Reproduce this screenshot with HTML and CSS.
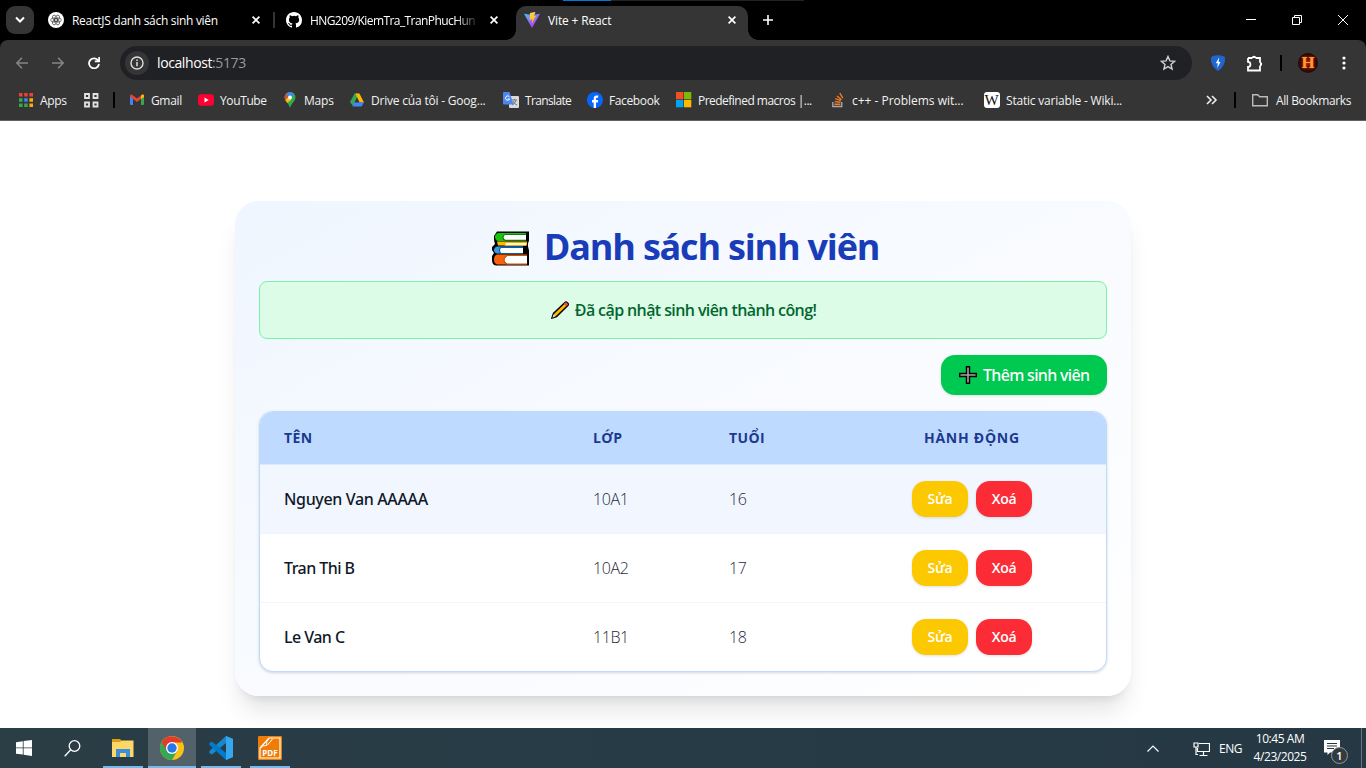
FILE: index.html
```html
<!DOCTYPE html>
<html lang="vi">
<head>
<meta charset="utf-8">
<title>Vite + React</title>
<link rel="stylesheet" href="styles.css">
</head>
<body>
<div class="screen">
  <header class="tabstrip">
    <div class="tab-search"><svg width="10" height="8" viewBox="0 0 10 8"><path d="M1 1.500l4 4 4-4" fill="none" stroke="#fff" stroke-width="2"/></svg></div>
    <div class="tab tab-first">
      <svg class="fav" viewBox="0 0 16 16"><circle cx="8" cy="8" r="8" fill="#fff"/><g fill="none" stroke="#444" stroke-width=".7"><ellipse cx="8" cy="6.100" rx="2.100" ry="3.500" transform="rotate(30 8 8)"/><ellipse cx="8" cy="6.100" rx="2.100" ry="3.500" transform="rotate(90 8 8)"/><ellipse cx="8" cy="6.100" rx="2.100" ry="3.500" transform="rotate(150 8 8)"/><ellipse cx="8" cy="6.100" rx="2.100" ry="3.500" transform="rotate(210 8 8)"/><ellipse cx="8" cy="6.100" rx="2.100" ry="3.500" transform="rotate(270 8 8)"/><ellipse cx="8" cy="6.100" rx="2.100" ry="3.500" transform="rotate(330 8 8)"/></g></svg>
      <span class="tab-title t-react">ReactJS danh sách sinh viên</span>
      <svg class="close" viewBox="0 0 8 8"><path d="M.6.6l6.8 6.8M7.4.6L.6 7.4"/></svg>
    </div>
    <div class="tab tab-git">
      <svg class="fav" viewBox="0 0 16 16"><path fill="#fff" d="M8 0C3.58 0 0 3.58 0 8c0 3.54 2.29 6.53 5.47 7.59.4.07.55-.17.55-.38 0-.19-.01-.82-.01-1.49-2.01.37-2.53-.49-2.69-.94-.09-.23-.48-.94-.82-1.13-.28-.15-.68-.52-.01-.53.63-.01 1.08.58 1.23.82.72 1.21 1.87.87 2.33.66.07-.52.28-.87.51-1.07-1.78-.2-3.64-.89-3.64-3.95 0-.87.31-1.59.82-2.15-.08-.2-.36-1.02.08-2.12 0 0 .67-.21 2.2.82a7.6 7.6 0 014 0c1.53-1.04 2.2-.82 2.2-.82.44 1.1.16 1.92.08 2.12.51.56.82 1.27.82 2.15 0 3.07-1.87 3.75-3.65 3.95.29.25.54.73.54 1.48 0 1.07-.01 1.93-.01 2.2 0 .21.15.46.55.38A8 8 0 0016 8c0-4.42-3.58-8-8-8z"/></svg>
      <span class="tab-title t-git">HNG209/KiemTra_TranPhucHun</span>
      <svg class="close" viewBox="0 0 8 8"><path d="M.6.6l6.8 6.8M7.4.6L.6 7.4"/></svg>
    </div>
    <div class="tab tab-active">
      <svg class="fav" viewBox="0 0 16 16"><defs><linearGradient id="vg" x1="0" y1="0" x2=".7" y2="1"><stop offset="0" stop-color="#41c8f5"/><stop offset=".9" stop-color="#bd34fe"/></linearGradient><linearGradient id="vy" x1="0" y1="0" x2="0" y2="1"><stop offset="0" stop-color="#ffdc50"/><stop offset="1" stop-color="#ffa800"/></linearGradient></defs><path d="M0 1.800l8 1.300 8-1.300L8 16z" fill="url(#vg)"/><path d="M6 .9l5.500-1-1.600 4.200 2.100-.3-4.200 8 .4-4.300-2.600.5z" fill="url(#vy)"/></svg>
      <span class="tab-title t-vite">Vite + React</span>
      <svg class="close" viewBox="0 0 8 8"><path d="M.6.6l6.8 6.8M7.4.6L.6 7.4"/></svg>
    </div>
    <svg class="newtab" viewBox="0 0 10 10"><path d="M5 0v10M0 5h10" stroke="#fff" stroke-width="1.600"/></svg>
    <div class="window-controls">
      <svg width="10" height="10" viewBox="0 0 10 10"><path d="M0 4.500h10"/></svg>
      <svg width="10" height="10" viewBox="0 0 10 10"><path d="M.5 2.500h7v7h-7zM2.500 2.500v-2h7v7h-2"/></svg>
      <svg width="10" height="10" viewBox="0 0 10 10"><path d="M0 0l10 10M10 0L0 10"/></svg>
    </div>
    <div class="top-edge"></div>
  </header>

  <div class="chrome">
    <div class="toolbar">
      <svg class="nav dim" viewBox="0 0 12 12"><path d="M12 6H1M6 .8L.8 6 6 11.200"/></svg>
      <svg class="nav dim" viewBox="0 0 12 12"><path d="M0 6h11M6 .8L11.200 6 6 11.200"/></svg>
      <svg class="nav reload" viewBox="0 0 12 12"><path d="M10.200 3.500A5 5 0 1 0 11 7M11.200 0v4.300H6.800"/></svg>
      <div class="omnibox">
        <div class="site-info"><svg width="14" height="14" viewBox="0 0 14 14"><circle cx="7" cy="7" r="6" fill="none" stroke="#dedede" stroke-width="1.400"/><path d="M7 6v4.200M7 3.500v1.400" stroke="#dedede" stroke-width="1.500"/></svg></div>
        <span class="url">localhost<span>:5173</span></span>
        <svg class="star" viewBox="0 0 16 16"><path d="M8 1.500l1.900 4.400 4.700.4-3.600 3.100 1.100 4.700L8 11.600l-4.100 2.500L5 9.400 1.400 6.300l4.700-.4z" fill="none" stroke="#d0d0d0" stroke-width="1.400"/></svg>
      </div>
      <svg class="ext" width="14" height="16" viewBox="0 0 14 16"><path d="M1 1.500Q7-1 13 1.500q2 1 .7 5.500Q12 13 7 16 2 13 .3 7-1 2.500 1 1.500z" fill="#2166cf"/><path d="M8 2.500L4.800 8.300h2L6.300 13l3.200-6H7.700z" fill="#fff"/></svg>
      <svg class="puzzle" width="17" height="17" viewBox="0 0 17 17"><path d="M2 3h4.500M9.500 3H14v4.700M14 10.500V15.500H2v-3.600c3.200 0 3.200-5 0-5V3" fill="none" stroke="#fff" stroke-width="1.800"/><path d="M5.800 3a2.200 2.200 0 0 1 4.400 0zM14 6.900a2.200 2.200 0 0 1 0 4.400z" fill="#fff"/></svg>
      <i class="bar tb"></i>
      <div class="avatar">H</div>
      <svg class="dots" width="4" height="14" viewBox="0 0 4 14" fill="#fff"><circle cx="2" cy="2" r="1.600"/><circle cx="2" cy="7" r="1.600"/><circle cx="2" cy="12" r="1.600"/></svg>
    </div>
    <nav class="bookmarks">
      <div class="bm"><svg viewBox="0 0 16 16"><g fill="#ea4335"><path d="M1 1h3.500v3.500H1zM6.200 1h3.500v3.500H6.200zM11.400 1H15v3.500h-3.600z"/></g><path fill="#34a853" d="M1 6.200h3.500v3.500H1zM1 11.400h3.500V15H1zM6.200 11.400h3.500V15H6.200z"/><path fill="#4285f4" d="M6.200 6.200h3.500v3.500H6.200z"/><path fill="#fbab05" d="M11.400 6.200H15v3.500h-3.600zM11.400 11.400H15V15h-3.600z"/></svg><span class="b-apps">Apps</span></div>
      <div class="bm"><svg viewBox="0 0 16 16" fill="none" stroke="#e3e3e3" stroke-width="1.800"><path d="M2 2h4v4H2zM10.500 2h4v4h-4zM2 10.500h4v4H2zM10.500 10.500h4v4h-4z"/></svg></div>
      <i class="bar"></i>
      <div class="bm"><svg viewBox="0 0 16 16"><path fill="#4285f4" d="M1 4l3 2.200V13H2q-1 0-1-1z"/><path fill="#34a853" d="M12 6.200L15 4v8q0 1-1 1h-2z"/><path fill="#ea4335" d="M1 4.500V4q0-2 2-1.300L8 6.500l5-3.800q2-.7 2 1.300v.5L8 10z"/><path fill="#fbbc04" d="M12 3.400l1-.7q2-.7 2 1.300v1l-3 2z"/></svg><span class="b-gmail">Gmail</span></div>
      <div class="bm"><svg viewBox="0 0 16 16"><rect y="2.300" width="16" height="11.400" rx="3" fill="#f03"/><path d="M6.500 5.500v5l4.200-2.500z" fill="#fff"/></svg><span class="b-yt">YouTube</span></div>
      <div class="bm map"><svg viewBox="0 0 16 16"><path fill="#34a853" d="M8 16Q7.200 13 5 10.500 2.500 8 2.500 5.500A5.500 5.500 0 0 1 13.500 5.500Q13.500 8 11 10.500 8.800 13 8 16z"/><path fill="#fbbc04" d="M3.300 8l3-3.300 3 3-4 3.300z"/><path fill="#ea4335" d="M2.800 4A5.500 5.500 0 0 1 4.200 1.600L7 4 3.300 7.800Q2.300 6 2.800 4z"/><path fill="#4285f4" d="M4.200 1.600Q8-1.500 12 1.600L7 6z"/><circle cx="8" cy="5.500" r="2" fill="#fff"/></svg><span class="b-maps">Maps</span></div>
      <div class="bm"><svg viewBox="0 0 16 16"><path fill="#34a853" d="M5.600 1.500h2.900L8 5.700 4 14 1 10z"/><path fill="#ffba00" d="M6.500 1.500h3.900L15 10.500h-4.500z"/><path fill="#4285f4" d="M5.200 10.200H15l-2.500 4.300h-9z"/><path fill="#353535" d="M8 6l2.300 4.200H5.600z"/></svg><span class="b-drive">Drive của tôi - Goog...</span></div>
      <div class="bm"><svg viewBox="0 0 16 16"><rect x="6" y="4" width="10" height="12" rx="1" fill="#dadada"/><path d="M9 8h5M11.500 7v1M13 8q-1 4-4 5M10 9q1 3 4 4" stroke="#70757a" fill="none"/><path fill="#4c86ee" d="M1 0h5.500l4 12.500H1q-1 0-1-1V1q0-1 1-1z"/><path d="M6.500 4.800A2.200 2.200 0 1 0 6.700 7H4.600" fill="none" stroke="#fff"/></svg><span class="b-trans">Translate</span></div>
      <div class="bm"><svg viewBox="0 0 16 16"><circle cx="8" cy="8" r="8" fill="#0866ff"/><path d="M6.700 15.900V10.500H5V8h1.700V6.700Q6.800 3.500 9.500 3.500h1.700v2.200H9.900q-.9 0-.9 1V8h2.200l-.4 2.500H9v5.400z" fill="#fff"/></svg><span class="b-fb">Facebook</span></div>
      <div class="bm"><svg viewBox="0 0 16 16"><path fill="#f25022" d="M0 0h7.300v7.300H0z"/><path fill="#7fba00" d="M8 0h7.300v7.300H8z"/><path fill="#00a4ef" d="M0 8h7.300v7.300H0z"/><path fill="#ffb900" d="M8 8h7.300v7.300H8z"/></svg><span class="b-ms">Predefined macros |...</span></div>
      <div class="bm so"><svg viewBox="0 0 16 16"><path d="M2.800 10v4.500h9V10" fill="none" stroke="#aaa" stroke-width="1.300"/><path d="M4.400 12.300h6M4.600 9.600l6 .7M5.300 6.700l5.500 2M7 4l4.500 3.700M9.800 1.200l3 5" stroke="#ef7c24" stroke-width="1.400"/></svg><span class="b-so">c++ - Problems wit...</span></div>
      <div class="bm"><div class="wiki">W</div><span class="b-wiki">Static variable - Wiki...</span></div>
      <svg class="more" width="12" height="10" viewBox="0 0 12 10"><path d="M1 1l4 4-4 4M6 1l4 4-4 4" fill="none" stroke="#eee" stroke-width="1.600"/></svg>
      <i class="bar"></i>
      <div class="bm all"><svg viewBox="0 0 16 14"><path d="M.7 1.700h5l2 2h7.600v9H.7z" fill="none" stroke="#bbb" stroke-width="1.400"/></svg><span class="b-all">All Bookmarks</span></div>
    </nav>
  </div>

  <main class="page">
    <section class="card">
      <h1><svg class="books" viewBox="0 0 37 36"><path d="M5 .500h32v9l-1 3v3l1 4v15H4Q0 34 0 29v-4l2-3-2-3v-3l3-3-1-4V5z"/><path fill="#16c60c" d="M6 2h28v8H6Q3 9 3 6T6 2z"/><path fill="#fff" stroke="#107c10" stroke-width="1.200" d="M34 3.500H13Q11 4 11 6.300T13 9.300h21"/><path fill="#ffb900" d="M5 10.500h30v4H6z"/><path fill="#fff" stroke="#f7a900" d="M34 11.500H13v3h21"/><path fill="#3a96dd" d="M5 15.500h26v7H5q-3-1-3-3.500t3-3.500z"/><path fill="#fff" stroke="#0063b1" stroke-width="1.200" d="M31 16.300H9Q7.500 17 7.500 19.300T9 22.500h22"/><path fill="#f7630c" d="M5 23.500h30v10H5q-3-1-3-5t3-5z"/><path fill="#fff" stroke="#ca5010" stroke-width="1.200" d="M35 24.500H15q-3 2-3 4.500t3 4h20"/></svg><span>Danh sách sinh viên</span></h1>
      <div class="alert"><svg viewBox="0 0 18 18"><path d="M1 17l1.500-4.500L14 1.500q1-1 2.200.2l.6.600q1 1.200 0 2.200L5.500 15.500z" fill="#ffb900" stroke="#000" stroke-width="1.500"/><path d="M12.500 3L14 1.700q1-.8 2 .2l.3.300q1 1 .2 2L15.300 5.300z" fill="#e74856"/><path d="M1.300 16.700l1.400-3.500 2 2z" fill="#ddd"/></svg><span>Đã cập nhật sinh viên thành công!</span></div>
      <div class="actions"><button class="add"><svg viewBox="0 0 18 18"><path d="M7.500.7h3v6.800h6.800v3h-6.800v6.800h-3v-6.800H.7v-3h6.800z" fill="#a5a5a5" stroke="#000" stroke-width="1.400"/></svg><span>Thêm sinh viên</span></button></div>
      <div class="table">
        <div class="row head"><span>TÊN</span><span>LỚP</span><span>TUỔI</span><span class="action-title">HÀNH ĐỘNG</span></div>
        <div class="row hover"><span class="name n1">Nguyen Van AAAAA</span><span>10A1</span><span>16</span><div class="buttons"><button class="edit">Sửa</button><button class="del">Xoá</button></div></div>
        <div class="row"><span class="name n2">Tran Thi B</span><span>10A2</span><span>17</span><div class="buttons"><button class="edit">Sửa</button><button class="del">Xoá</button></div></div>
        <div class="row"><span class="name n3">Le Van C</span><span>11B1</span><span>18</span><div class="buttons"><button class="edit">Sửa</button><button class="del">Xoá</button></div></div>
      </div>
    </section>
  </main>

  <footer class="taskbar">
    <div class="task"><svg width="16" height="16" viewBox="0 0 16 16" fill="#fff"><path d="M0 2.200L6.800 1.200V7.500H0zM7.600 1.100L16 0v7.500H7.600zM0 8.300h6.800v6.300L0 13.700zM7.600 8.300H16V16l-8.400-1.200z"/></svg></div>
    <div class="task"><svg width="17" height="17" viewBox="0 0 17 17" fill="none" stroke="#fff" stroke-width="1.300"><circle cx="10.500" cy="6" r="5.300"/><path d="M6.700 9.800L.7 16.300"/></svg></div>
    <div class="task open w48"><svg width="22" height="19" viewBox="0 0 22 19"><path d="M0 0h8l2 2h11v5H0z" fill="#dc9f12"/><path d="M0 3h8l2-1.500h11.500V18H0z" fill="#ffd767"/><path d="M4 10h14v8h-4v-4H8v4H4z" fill="#3b8edb"/></svg></div>
    <div class="task open active"><svg width="24" height="24" viewBox="0 0 24 24"><circle cx="12" cy="12" r="12" fill="#fbc116"/><path d="M1.600 6A12 12 0 0 0 12 24l5.200-9L12 12z" fill="#34a853"/><path d="M1.600 6A12 12 0 0 1 22.400 6.500H12L6.800 15z" fill="#e33b2e"/><circle cx="12" cy="12" r="6" fill="#fff"/><circle cx="12" cy="12" r="4.700" fill="#2878e8"/></svg></div>
    <div class="task open"><svg width="24" height="24" viewBox="0 0 24 24"><path d="M17 0l7 3v18l-7 3V7L3 18.500.4 17V15z" fill="#1689ce"/><path d="M.4 7L3 5.500 17 17v7L.4 9z" fill="#007acc"/><path d="M17 0l7 3v18l-7 3z" fill="#36a7ee"/></svg></div>
    <div class="task open"><svg width="24" height="24" viewBox="0 0 24 24"><rect width="24" height="24" rx="1" fill="#f07c08"/><path d="M2 12L11 2h11v20H2z" fill="none" stroke="#fff" stroke-width="1.200"/><path d="M2.500 12q2-3 6-2.500Q8 5 11 2.500M9.500 9l5-6" stroke="#fff" fill="none"/><text x="12" y="20" text-anchor="middle" class="pdf">PDF</text></svg></div>
    <div class="tray">
      <svg class="up" width="12" height="7" viewBox="0 0 12 7"><path d="M.5 6.500L6 1l5.500 5.500"/></svg>
      <svg class="net" width="17" height="14" viewBox="0 0 17 14"><path d="M6 1.500h10.500v8H4.500V6M10.500 9.500v4M6.500 13.500h8M1 1h4v4H1zM3 5v7.500h2"/></svg>
      <span class="lang">ENG</span>
      <div class="clock"><span>10:45 AM</span><span class="date">4/23/2025</span></div>
      <div class="notice"><svg width="17" height="17" viewBox="0 0 17 17"><path d="M0 0h16v12.500H6L3.500 15v-2.500H0z" fill="#fff"/><path d="M3 3.500h10M3 6h10M3 8.500h7" stroke="#263943" stroke-width="1"/></svg><b>1</b></div>
      <i class="desk-edge"></i>
    </div>
  </footer>
</div>
</body>
</html>
```
FILE: styles.css
```css
* { box-sizing: border-box; }
body { margin: 0; background: #fff; font-family: "Open Sans", "Noto Sans", sans-serif; }
.screen { width: 1366px; height: 768px; overflow: hidden; display: flex; flex-direction: column; background: linear-gradient(#000 60px, #fff 60px); }
svg { display: block; flex: none; }
span { white-space: nowrap; }
button { border: 0; font: inherit; color: #fff; }

/* tabs */
.tabstrip { position: relative; width: 1366px; height: 40px; flex: none; background: #000; display: flex; align-items: center; color: #fff; font-size: 12px; }
.tab-search { width: 28px; height: 28px; margin-left: 6px; border-radius: 9px; background: #353535; display: grid; place-items: center; }
.tab { display: flex; align-items: center; height: 34px; }
.fav { width: 16px; height: 16px; margin-right: 8px; }
.tab-title { width: 166px; margin-right: 14px; }
.close { width: 8px; height: 8px; stroke: #fff; stroke-width: 1.7; }
.tab-first { margin-left: 14px; width: 227px; border-right: 2px solid #353535; height: 16px; }
.tab-git { margin-left: 11px; }
.t-react { letter-spacing: -.3px; }
.t-git { letter-spacing: -.58px; -webkit-mask-image: linear-gradient(90deg, #000 145px, transparent 170px); mask-image: linear-gradient(90deg, #000 145px, transparent 170px); }
.t-vite { letter-spacing: -.15px; }
.tab-active { position: relative; width: 232px; height: 34px; margin: 6px 0 0 18px; padding: 0 0 6px 8px; border-radius: 10px 10px 0 0; background: #353535; }
.tab-active::before, .tab-active::after { content: ""; position: absolute; bottom: 0; width: 10px; height: 10px; }
.tab-active::before { left: -10px; background: radial-gradient(circle at 0 0, transparent 9.5px, #353535 10px); }
.tab-active::after { right: -10px; background: radial-gradient(circle at 100% 0, transparent 9.5px, #353535 10px); }
.newtab { width: 10px; height: 10px; margin-left: 15px; }
.window-controls { margin-left: auto; padding-right: 18px; display: flex; gap: 36px; }
.window-controls svg { fill: none; stroke: #fff; stroke-width: 1; }
.top-edge { position: absolute; top: 0; left: 563px; width: 241px; height: 1px; background: linear-gradient(90deg, #0078d7 48px, #222 48px); }

/* browser bars */
.chrome { width: 1366px; height: 81px; flex: none; background: #353535; border-bottom: 1px solid #626262; border-radius: 8px 8px 0 0; color: #f2f2f2; }
.toolbar { height: 46px; display: flex; align-items: center; padding-left: 16px; }
.nav { width: 12px; height: 12px; margin-right: 24px; fill: none; stroke: #fff; stroke-width: 1.8; }
.nav.dim { stroke: #858585; stroke-width: 1.5; }
.nav.reload { margin-right: 20px; }
.omnibox { width: 1072px; height: 34px; border-radius: 17px; background: #202124; display: flex; align-items: center; padding: 0 16px 0 5px; }
.site-info { width: 24px; height: 24px; border-radius: 50%; background: #353535; display: grid; place-items: center; }
.url { margin-left: 8px; padding-bottom: 1px; font-size: 14px; letter-spacing: -.4px; color: #fff; }
.url span { color: #999; }
.star { width: 16px; height: 16px; margin-left: auto; }
.ext { margin-left: 19px; }
.puzzle { margin-left: 21px; }
.bar { width: 2px; height: 16px; background: #000; flex: none; }
.tb { margin-left: 17px; }
.avatar { width: 20px; height: 20px; border-radius: 50%; margin-left: 16px; background: radial-gradient(#872008, #180504 75%); color: #ff9b35; font: bold 17px/20px "Liberation Serif", serif; text-align: center; text-shadow: 0 0 2px #f30; }
.dots { margin-left: 24px; }
.bookmarks { height: 28px; display: grid; grid-template-columns: 65px 30px 16px 69px 85px 66px 154px 84px 89px 155px 153px 222px 28px 18px 110px; align-items: center; padding-left: 18px; font-size: 12px; }
.bm { display: flex; align-items: center; gap: 6px; }
.bm svg { width: 16px; height: 16px; }
.bm.map, .bm.so { margin-left: -1px; }
.bm.all svg { height: 14px; }
.bm.all { gap: 8px; }
.wiki { width: 16px; height: 16px; border-radius: 3px; background: #fff; color: #111; font: 15px/16px "Liberation Serif", serif; text-align: center; text-indent: -1px; }
.bm span { letter-spacing: -.2px; }
.bm .b-apps, .bm .b-gmail { letter-spacing: -.35px; }
.bm .b-yt, .bm .b-fb, .bm .b-all { letter-spacing: -.38px; }
.bm .b-trans { letter-spacing: -.65px; }
.bm .b-ms { letter-spacing: -.52px; }
.bm .b-so { letter-spacing: -.02px; }

/* page */
.page { height: 607px; flex: none; background: #fff; padding-top: 80px; overflow: hidden; }
.card { width: 896px; height: 495px; margin-left: 235px; padding: 24px; border-radius: 24px; background: linear-gradient(to bottom right, #eff6ff, #f6f9ff 35%, #fff); box-shadow: 0 20px 25px -5px rgba(0,0,0,.1), 0 8px 10px -6px rgba(0,0,0,.1); }
h1 { height: 40px; margin: 0 0 16px; padding-left: 5px; display: flex; justify-content: center; align-items: center; gap: 15px; color: #193cb8; font-size: 36px; line-height: 40px; font-weight: 700; }
h1 span { letter-spacing: -1.2px; padding-top: 4px; }
.books { width: 37px; height: 36px; margin-top: 7px; }
.alert { height: 58px; padding-left: 1px; border: 1px solid #7bf1a8; border-radius: 8px; background: #dcfce7; color: #016630; font-size: 16px; font-weight: 600; display: flex; align-items: center; justify-content: center; gap: 6px; }
.alert svg { width: 18px; height: 18px; }
.alert span { letter-spacing: -.6px; }
.actions { display: flex; justify-content: flex-end; margin: 16px 0; }
.add { width: 166px; height: 40px; padding: 0 0 0 18px; border-radius: 14px; background: #00c951; display: flex; align-items: center; gap: 6px; font-family: "Noto Sans", sans-serif; font-size: 16px; font-weight: 500; box-shadow: 0 1px 3px rgba(0,0,0,.12); }
.add svg { width: 18px; height: 18px; }
.add span { letter-spacing: -.68px; }
.table { height: 261px; border: 1px solid #bedbff; border-radius: 14px; overflow: hidden; background: #fff; box-shadow: 0 1px 3px rgba(0,0,0,.15); }
.row { height: 69px; display: grid; grid-template-columns: 309px 136px 183px 1fr; align-items: center; padding-left: 24px; border-top: 1px solid #eff6ff; font-size: 16px; color: #1e2939; }
.row > span { letter-spacing: -.4px; font-weight: 300; }
.row .name { font-family: "Noto Sans", sans-serif; font-weight: 500; letter-spacing: -.55px; color: #101828; }
.row .n1 { letter-spacing: -.35px; }
.row.hover { background: #f1f6ff; border-top-color: #dbeafe; }
.row.head { height: 52px; padding-bottom: 2px; border: 0; background: #bedbff; }
.row.head > span { font-size: 14px; font-weight: 700; color: #1c398e; letter-spacing: .35px; }
.row.head .action-title { padding-left: 12px; letter-spacing: .75px; }
.buttons { display: flex; gap: 8px; }
.buttons button { width: 56px; height: 36px; padding: 0 0 1px; border-radius: 14px; font-size: 14px; font-weight: 600; letter-spacing: -.3px; box-shadow: 0 1px 3px rgba(0,0,0,.12); }
.edit { background: #fcc800; }
.del { background: #fb2c36; }

/* taskbar */
.taskbar { height: 40px; flex: none; display: flex; background: linear-gradient(90deg, #2b3d45, #263b46 45%, #253844); color: #fff; }
.task { width: 48px; height: 40px; display: grid; place-items: center; }
.task.open { width: 40px; margin-left: 9px; border-bottom: 2px solid #76b9ed; padding-top: 2px; }
.task.open.w48 { margin-left: 7px; }
.task.open.active { width: 48px; margin-left: 5px; background: #53626a; }
.task.active + .task { margin-left: 5px; }
.pdf { font: 700 8px "Open Sans", sans-serif; fill: #fff; }
.tray { margin-left: auto; display: flex; align-items: center; font-size: 12px; }
.tray > svg { fill: none; stroke: #fff; stroke-width: 1.2; }
.net { margin-left: 34px; margin-top: 2px; }
.lang { margin-left: 9px; width: 24px; letter-spacing: -.5px; }
.clock { width: 56px; margin-left: 9px; display: flex; flex-direction: column; align-items: center; line-height: 18px; letter-spacing: -.45px; }
.notice { position: relative; margin-left: 16px; width: 37px; height: 17px; }
.notice b { position: absolute; left: 7px; top: 7px; width: 17px; height: 17px; border: 1px solid #8d979c; border-radius: 50%; background: #333b3f; font-size: 11px; line-height: 15px; text-align: center; font-weight: 600; }
.desk-edge { width: 5px; height: 40px; border-left: 1px solid #68757c; }
```
